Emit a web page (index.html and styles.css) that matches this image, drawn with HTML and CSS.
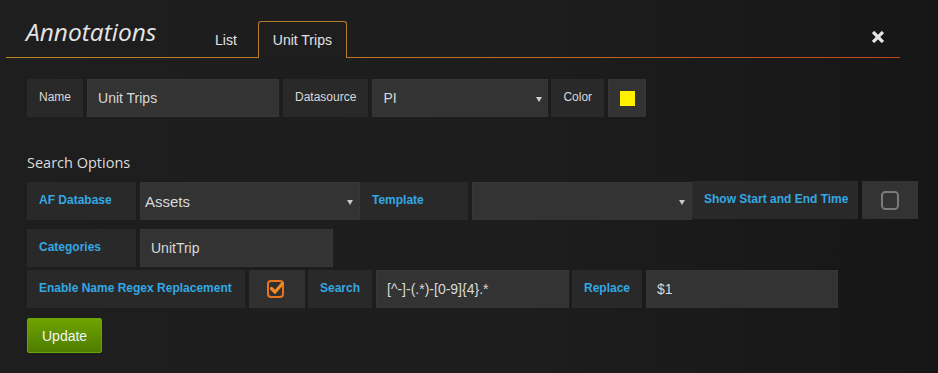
FILE: index.html
```html
<!DOCTYPE html>
<html>
<head>
<meta charset="utf-8">
<link rel="stylesheet" href="styles.css">
</head>
<body>
<div class="modal">
  <div class="header">
    <h2 class="title">Annotations</h2>
    <ul class="tabs">
      <li class="tab">List</li>
      <li class="tab active">Unit Trips</li>
    </ul>
    <button class="close" aria-label="close">
      <svg width="12" height="12" viewBox="0 0 12 12"><path d="M2.2 2.2 L9.8 9.8 M9.8 2.2 L2.2 9.8" stroke="#e6e6e6" stroke-width="3.3" stroke-linecap="square"/></svg>
    </button>
  </div>
  <div class="body">
    <div class="row row-1">
      <span class="label">Name</span>
      <span class="input w-name">Unit Trips</span>
      <span class="label">Datasource</span>
      <span class="select w-ds">PI<i class="caret"></i></span>
      <span class="label label-color">Color</span>
      <span class="colorbox"><i class="swatch"></i></span>
    </div>

    <h5 class="section">Search Options</h5>

    <div class="row row-2">
      <span class="label blue w-109">AF Database</span>
      <span class="select w-220 flush">Assets<i class="caret"></i></span>
      <span class="label blue w-108">Template</span>
      <span class="select w-220 flush"><i class="caret"></i></span>
      <span class="label blue up w-166">Show Start and End Time</span>
      <span class="check up">
        <svg width="18" height="19" viewBox="0 0 18 19"><rect x="1" y="1" width="16" height="17" rx="3.5" fill="none" stroke="#7a7a7a" stroke-width="2"/></svg>
      </span>
    </div>

    <div class="row row-3">
      <span class="label blue w-109">Categories</span>
      <span class="input w-193">UnitTrip</span>
    </div>

    <div class="row row-4">
      <span class="label blue w-218">Enable Name Regex Replacement</span>
      <span class="check tuck">
        <svg width="24" height="22" viewBox="0 0 24 22"><rect x="2" y="4" width="15" height="16" rx="3" fill="none" stroke="#e8751a" stroke-width="2"/><path d="M5.5 11.5 L9 15 L16.5 6.5" fill="none" stroke="#f08a24" stroke-width="3.2" stroke-linecap="round" stroke-linejoin="round"/></svg>
      </span>
      <span class="label blue w-64">Search</span>
      <span class="input w-193 tuck">[^-]-(.*)-[0-9]{4}.*</span>
      <span class="label blue w-70">Replace</span>
      <span class="input w-192">$1</span>
    </div>

    <button class="btn-update">Update</button>
  </div>
</div>
</body>
</html>
```

FILE: styles.css
```css
html, body {
  margin: 0;
  padding: 0;
  height: 100%;
}
body {
  background: linear-gradient(to right, #1f1e1f 0%, #1e1d1e 55%, #161616 100%);
  font-family: "Liberation Sans", Arial, sans-serif;
  color: #d8d9da;
  overflow: hidden;
}
.modal {
  margin-left: 6px;
  width: 894px;
}
.header {
  display: flex;
  align-items: flex-end;
  height: 57px;
  border-bottom: 1px solid;
  border-image: linear-gradient(to right, #b8872a 0%, #bd6a24 60%, #c2441e 100%) 1;
  position: relative;
}
.title {
  margin: 0 0 11px 20px;
  font-family: "Open Sans", sans-serif;
  font-style: italic;
  font-weight: 400;
  font-size: 24.5px;
  line-height: 28px;
  color: #e4e4e4;
  width: 173px;
  flex-shrink: 0;
  white-space: nowrap;
}
.tabs {
  list-style: none;
  display: flex;
  align-items: flex-end;
  margin: 0 0 -1px 0;
  padding: 0;
}
.tab {
  font-size: 14px;
  color: #e2e2e2;
  padding: 0 15px;
  height: 36px;
  line-height: 36px;
  border: 1px solid transparent;
  border-bottom: none;
  margin-right: 5px;
}
.tab.active {
  padding: 0 14px;
  border-color: #b47a2d;
  border-radius: 3px 3px 0 0;
  background: #1f1e1f;
  height: 36px;
  line-height: 37px;
}
.close {
  margin-left: auto;
  margin-right: 16px;
  margin-bottom: 14px;
  background: none;
  border: 0;
  padding: 0;
  width: 12px;
  height: 12px;
  display: flex;
}
.body {
  padding: 21px 0 0 21px;
}
.row {
  display: flex;
  gap: 4px;
  height: 38px;
}
.row > * { flex-shrink: 0; }
.row-2 { margin-bottom: 9px; }
.row-3 { margin-bottom: 3px; }
.label {
  display: flex;
  align-items: center;
  padding: 0 12px 2px;
  background: #292929;
  font-size: 12px;
  color: #d8d9da;
  white-space: nowrap;
  box-sizing: border-box;
}
.label.blue {
  color: #33a8e3;
  font-weight: 700;
}
.label.up, .check.up { position: relative; top: -1px; }
.label-color { margin-left: -1px; }
.w-109 { width: 109px; }
.w-108 { width: 108px; }
.w-166 { width: 166px; }
.w-218 { width: 218px; }
.w-64 { width: 64px; }
.w-70 { width: 70px; }
.tuck { margin-right: -1px; }
.input, .select {
  display: flex;
  align-items: center;
  box-sizing: border-box;
  background: #333;
  border: 1px solid #363636;
  padding: 0 11px 0 10px;
  font-size: 14px;
  color: #d8d9da;
  white-space: nowrap;
  position: relative;
}
.w-name { width: 192px; }
.w-193 { width: 193px; }
.w-192 { width: 192px; }
.w-ds { width: 176px; }
.w-220 { width: 220px; }
.select.w-220 { padding-left: 4px; font-size: 15px; }
.select.flush { margin-right: -4px; }
.caret {
  position: absolute;
  right: 6px;
  top: 17px;
  width: 0;
  height: 0;
  border-left: 3.5px solid transparent;
  border-right: 3.5px solid transparent;
  border-top: 5px solid #c8c8c8;
}
.w-ds .caret { right: 5px; top: 17px; border-top-color: #d0d0d0; }
.colorbox {
  width: 38px;
  box-sizing: border-box;
  background: #333;
  border: 1px solid #363636;
  display: flex;
  align-items: center;
  justify-content: center;
  padding-bottom: 1px;
}
.swatch {
  display: block;
  width: 15px;
  height: 15px;
  background: #fff200;
  margin-top: 2px;
}
.check {
  width: 56px;
  background: #333;
  display: flex;
  align-items: center;
  justify-content: center;
}
.row-4 .check { background: #303030; }
.row-4 .check svg { margin-left: 2px; margin-top: -3px; }
.section {
  margin: 0;
  padding: 36px 0 9px;
  font-family: "Open Sans", sans-serif;
  font-weight: 400;
  font-size: 14.5px;
  line-height: 20px;
  color: #dcdcdc;
}
.btn-update {
  margin-top: 10px;
  height: 35px;
  padding: 0 14px;
  font-family: "Liberation Sans", Arial, sans-serif;
  font-size: 14px;
  color: #f4f4f4;
  background: linear-gradient(to bottom, #70a300 0%, #5a8c00 60%, #4e7d00 100%);
  border: 1px solid #6aa40a;
  border-radius: 2px;
}
```
